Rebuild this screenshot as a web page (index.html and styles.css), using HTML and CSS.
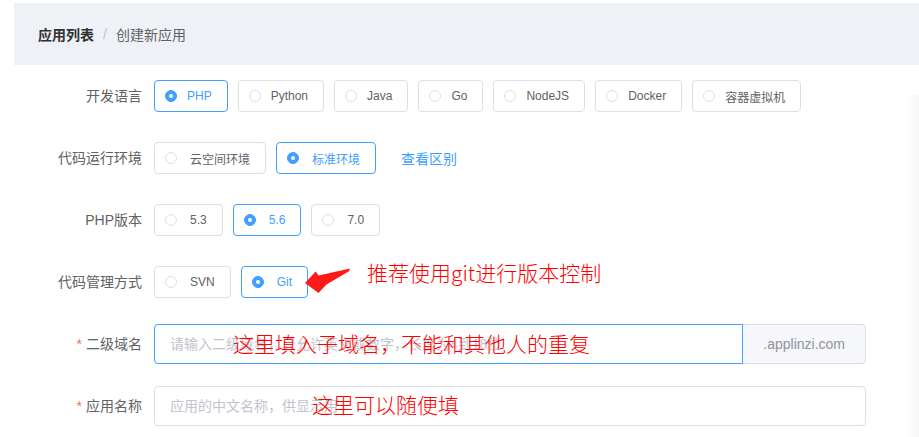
FILE: index.html
```html
<!DOCTYPE html>
<html lang="zh-CN">
<head>
<meta charset="utf-8">
<title>创建新应用</title>
<link rel="stylesheet" href="styles.css">
</head>
<body>
<div class="page">
  <div class="crumbs">
    <span class="crumb-strong">应用列表</span>
    <span class="sep">/</span>
    <span class="crumb">创建新应用</span>
  </div>

  <form class="form">
    <div class="item">
      <label class="label">开发语言</label>
      <div class="content">
        <span class="radio on"><span class="dot"></span>PHP</span>
        <span class="radio"><span class="dot"></span>Python</span>
        <span class="radio"><span class="dot"></span>Java</span>
        <span class="radio"><span class="dot"></span>Go</span>
        <span class="radio"><span class="dot"></span>NodeJS</span>
        <span class="radio"><span class="dot"></span>Docker</span>
        <span class="radio"><span class="dot"></span>容器虚拟机</span>
      </div>
    </div>

    <div class="item">
      <label class="label">代码运行环境</label>
      <div class="content wide">
        <span class="radio"><span class="dot"></span>云空间环境</span>
        <span class="radio on"><span class="dot"></span>标准环境</span>
        <a class="link">查看区别</a>
      </div>
    </div>

    <div class="item">
      <label class="label">PHP版本</label>
      <div class="content wide">
        <span class="radio"><span class="dot"></span>5.3</span>
        <span class="radio on"><span class="dot"></span>5.6</span>
        <span class="radio"><span class="dot"></span>7.0</span>
      </div>
    </div>

    <div class="item">
      <label class="label">代码管理方式</label>
      <div class="content wide">
        <span class="radio"><span class="dot"></span>SVN</span>
        <span class="radio on"><span class="dot"></span>Git</span>
      </div>
      <svg class="arrow" width="55" height="35" viewBox="0 0 55 35">
        <polygon points="5,21 15.7,9.5 18.5,13.5 50,6.5 49,9.3 26.5,22.5 18.5,31" fill="#ff1a1a"/>
      </svg>
      <span class="note note-git">推荐使用git进行版本控制</span>
    </div>

    <div class="item">
      <label class="label"><span class="req">*</span>二级域名</label>
      <div class="content">
        <div class="input-group">
          <input class="input focus" type="text" placeholder="请输入二级域名，只允许英文或数字，长度为4到18位">
          <span class="append">.applinzi.com</span>
        </div>
      </div>
      <span class="note note-domain">这里填入子域名，不能和其他人的重复</span>
    </div>

    <div class="item">
      <label class="label"><span class="req">*</span>应用名称</label>
      <div class="content">
        <input class="input full" type="text" placeholder="应用的中文名称，供显示用">
      </div>
      <span class="note note-name">这里可以随便填</span>
    </div>
  </form>
  <div class="edge"></div>
</div>
</body>
</html>
```

FILE: styles.css
```css
html, body {
  margin: 0;
  padding: 0;
  background: #ffffff;
  overflow: hidden;
}

body {
  font-family: "Liberation Sans", "Noto Sans CJK SC", sans-serif;
  color: #606266;
}

.page {
  position: relative;
  width: 919px;
  height: 437px;
  padding-top: 3px;
  box-sizing: border-box;
}

.crumbs {
  margin-left: 14px;
  height: 62px;
  background: #eef1f6;
  display: flex;
  align-items: center;
  padding-left: 24px;
  font-size: 14px;
}

.crumb-strong {
  font-weight: bold;
  color: #303133;
}

.sep {
  margin: 0 9px;
  color: #c0c4cc;
}

.crumb {
  color: #606266;
}

.form {
  margin: 0;
  padding-top: 11px;
  width: 866px;
}

.item {
  position: relative;
  display: flex;
  align-items: center;
  height: 40px;
  margin-bottom: 22px;
}

.label {
  flex: 0 0 154px;
  box-sizing: border-box;
  padding-right: 12px;
  text-align: right;
  font-size: 14px;
  line-height: 40px;
  color: #606266;
}

.req {
  color: #f56c6c;
  margin-right: 4px;
}

.content {
  flex: 1;
  display: flex;
  align-items: center;
  height: 40px;
}

.radio {
  display: inline-flex;
  align-items: center;
  box-sizing: border-box;
  height: 32px;
  padding: 0 15px 0 10px;
  margin-right: 10px;
  border: 1px solid #dcdfe6;
  border-radius: 4px;
  font-size: 12px;
  color: #606266;
  white-space: nowrap;
}

.dot {
  position: relative;
  width: 12px;
  height: 12px;
  box-sizing: border-box;
  border: 1px solid #dcdfe6;
  border-radius: 50%;
  background: #fff;
  margin-right: 10px;
  flex: 0 0 12px;
}

.wide .radio {
  margin-right: 10px;
}

.wide .dot {
  margin-right: 13px;
}

.radio.on {
  border-color: #409eff;
  color: #409eff;
}

.radio.on .dot {
  background: #409eff;
  border-color: #409eff;
}

.radio.on .dot::after {
  content: "";
  position: absolute;
  left: 3px;
  top: 3px;
  width: 4px;
  height: 4px;
  border-radius: 50%;
  background: #fff;
}

.link {
  margin-left: 15px;
  font-size: 14px;
  color: #409eff;
  cursor: pointer;
}

.input-group {
  display: flex;
  width: 712px;
  height: 40px;
}

.input {
  box-sizing: border-box;
  height: 40px;
  padding: 0 15px;
  border: 1px solid #dcdfe6;
  border-radius: 4px;
  font-family: "Liberation Sans", "Noto Sans CJK SC", sans-serif;
  font-size: 14px;
  color: #606266;
  outline: none;
  background: #fff;
}

.input::placeholder {
  color: #c0c4cc;
}

.input.focus {
  flex: 1;
  min-width: 0;
  border-color: #409eff;
  border-radius: 4px 0 0 4px;
}

.input.full {
  width: 712px;
}

.append {
  display: flex;
  align-items: center;
  box-sizing: border-box;
  padding: 0 20px;
  background: #f5f7fa;
  border: 1px solid #dcdfe6;
  border-left: 0;
  border-radius: 0 4px 4px 0;
  font-size: 14px;
  color: #909399;
  white-space: nowrap;
}

.note {
  position: absolute;
  font-family: "Noto Sans CJK SC", sans-serif;
  font-weight: 300;
  font-size: 21px;
  line-height: 1;
  color: #ff0000;
  white-space: nowrap;
}

.note-git {
  left: 367px;
  top: 0px;
}

.note-domain {
  left: 233px;
  top: 9px;
}

.note-name {
  left: 312px;
  top: 8px;
}

.arrow {
  position: absolute;
  left: 300px;
  top: 0;
}

.edge {
  position: absolute;
  left: 906px;
  top: 95px;
  width: 13px;
  bottom: 0;
  background: linear-gradient(to right, rgba(0, 0, 0, 0), rgba(0, 0, 0, 0.035));
}
```
